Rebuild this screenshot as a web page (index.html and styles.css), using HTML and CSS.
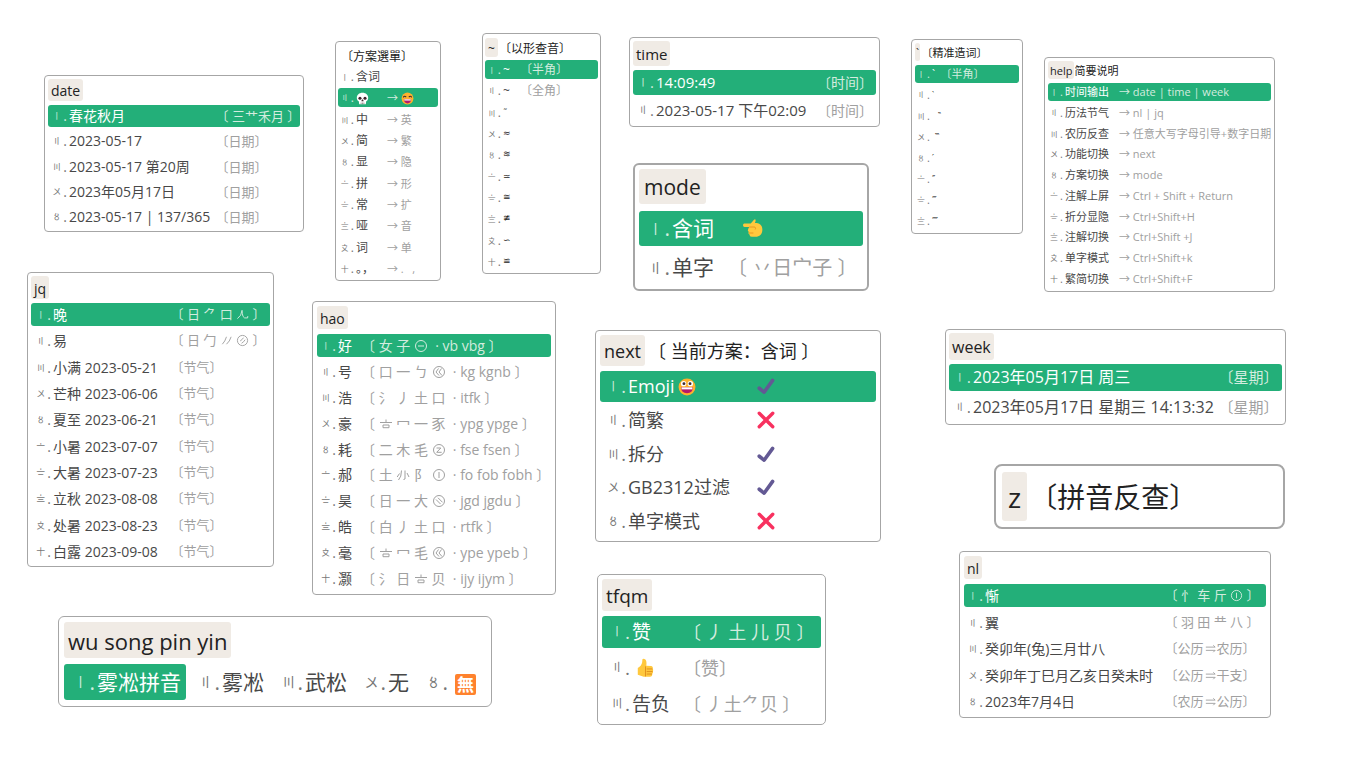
FILE: index.html
```html
<!DOCTYPE html>
<html lang="zh-CN">
<head>
<meta charset="utf-8">
<title>输入法候选窗口</title>
<link rel="stylesheet" href="styles.css">
</head>
<body>
<svg class="defs" aria-hidden="true">
  <symbol id="skull" viewBox="0 0 16 16"><path d="M8 1C3.800 1 1 3.700 1 7.200c0 2 .8 3.500 2.400 4.300L4 15h8l.6-3.500C14.200 10.700 15 9.200 15 7.200 15 3.700 12.200 1 8 1z" fill="#fff"/><circle cx="4.900" cy="7.600" r="1.900" fill="#40242c"/><circle cx="11.100" cy="7.600" r="1.900" fill="#40242c"/><path d="M8 9.300l-1.100 1.900h2.200zM6.300 13v2M8 13v2M9.700 13v2" fill="#40242c" stroke="#40242c" stroke-width=".6"/></symbol>
  <symbol id="laugh" viewBox="0 0 16 16"><circle cx="8" cy="8" r="7.300" fill="#ffb02e"/><path d="M2.800 6.600q1.600-2.400 3.600-.2M9.600 6.400q2-2.200 3.600.2" fill="none" stroke="#402a32" stroke-width="1.300"/><path d="M3.500 9h9q-.3 5-4.500 5T3.500 9z" fill="#b31a6d"/><path d="M4 9h8v1.500H4z" fill="#fff"/></symbol>
  <symbol id="grin" viewBox="0 0 16 16"><circle cx="8" cy="8" r="7.500" fill="#ffb02e"/><circle cx="5" cy="5" r="2.400" fill="#fff"/><circle cx="11" cy="5" r="2.400" fill="#fff"/><circle cx="5.300" cy="5" r="1.300" fill="#402a32"/><circle cx="10.700" cy="5" r="1.300" fill="#402a32"/><path d="M2.700 8.300h10.600q-.2 5.200-5.300 5.200T2.700 8.300z" fill="#b4186b"/><path d="M3.200 8.300h9.600v1.800H3.200z" fill="#fff"/></symbol>
  <symbol id="point" viewBox="0 0 16 16"><path d="M1 4.300h5.200L8.800 1.300q1.500-1 1.300 1L9.500 4c3.500 0 6 1.500 6 5.200 0 3.800-2.300 5.800-5.500 5.800H7q-2-.2-1.700-1.700Q3.800 12.600 4.500 11 3.300 10 4.200 8.600L5 7.200H1.200Q0 7 0 5.700t1-1.400z" fill="#ffc83d"/><path d="M5 7.200h4.500q1 1.200.2 2M4.800 12h3.500" fill="none" stroke="#e08a1a" stroke-width=".6"/></symbol>
  <symbol id="thumb" viewBox="0 0 16 16"><path d="M1.500 8.500Q4.800 6.300 5.200 3.500L5.400 1q1-1 2.500.2 1.300 1.300.8 5.300l4.300.2q1.800.6 1 2.300 1 1 .2 2.200.6 1.200-.5 2 .2 2.300-2 2.600H6.500L1.500 14z" fill="#ffc83d"/><path d="M8 7v8.500M9 9.200h5M9 11.400h5M9 13.500h4.500" stroke="#e08f1c" stroke-width=".8"/></symbol>
  <symbol id="check" viewBox="0 0 16 16"><path d="M2 10l4.300 3.500L13.900 3" fill="none" stroke="#635994" stroke-width="3.200" stroke-linecap="round" stroke-linejoin="round"/></symbol>
  <symbol id="cross" viewBox="0 0 16 16"><path d="M2 2l12 12M14 2L2 14" fill="none" stroke="#f8315f" stroke-width="3" stroke-linecap="round"/></symbol>
  <symbol id="gao" viewBox="0 0 14 14"><path d="M7 2.500v2.500M1 5.500h12M4 8h6v2.700H4z"/></symbol>
  <symbol id="legs" viewBox="0 0 14 14"><path d="M6.500 2.500Q6 8.500 1.500 11.500M6.500 2.500q.2 4 1 6.500 1 2.500 5 1.700l.2-2"/></symbol>
  <symbol id="slants" viewBox="0 0 14 14"><path d="M7 3Q5.500 8 2.500 11M12 3Q10.500 8 7 11"/></symbol>
  <symbol id="feet" viewBox="0 0 14 14"><path d="M5.500 2.500Q5.500 9 2.500 12M9 2.500v8.500l-1.500.5M3.500 5.500L1.200 9M11 5l2 4"/></symbol>
  <symbol id="c-heng" viewBox="0 0 14 14"><circle cx="7" cy="7" r="5.500"/><path d="M4 7h6"/></symbol>
  <symbol id="c-zhe" viewBox="0 0 14 14"><circle cx="7" cy="7" r="5.500"/><path d="M6.500 3.500L4 7l3 3.500M9.500 3.500L7 7l3 3.500"/></symbol>
  <symbol id="c-yi" viewBox="0 0 14 14"><circle cx="7" cy="7" r="5.500"/><path d="M4.500 5h4.300L4.700 9.300h5"/></symbol>
  <symbol id="c-shu" viewBox="0 0 14 14"><circle cx="7" cy="7" r="5.500"/><path d="M7 4v6"/></symbol>
  <symbol id="c-na" viewBox="0 0 14 14"><circle cx="7" cy="7" r="5.500"/><path d="M4 5.500l4.500 4.500M6 3.800l4.500 4.500"/></symbol>
  <symbol id="c-pie" viewBox="0 0 14 14"><circle cx="7" cy="7" r="5.500"/><path d="M8 4Q7 6 4.500 7.500M9.800 6.200Q8.500 8.500 6 10"/></symbol>
  <symbol id="turn" viewBox="0 0 14 14"><path d="M2 5.500h10M2 9h10M10 3.500l2 2M12 9l-2 2"/></symbol>
</svg>
<main class="canvas">

<section class="win date">
  <header><span class="chip">date</span></header>
  <ol>
    <li class="on"><span class="n"><b>〡</b>.</span><span class="t">春花秋月</span><span class="c">〔 三艹禾月 〕</span></li>
    <li><span class="n"><b>〢</b>.</span><span class="t">2023-05-17</span><span class="c">〔日期〕</span></li>
    <li><span class="n"><b>〣</b>.</span><span class="t">2023-05-17 第20周</span><span class="c">〔日期〕</span></li>
    <li><span class="n"><b>〤</b>.</span><span class="t">2023年05月17日</span><span class="c">〔日期〕</span></li>
    <li><span class="n"><b>〥</b>.</span><span class="t">2023-05-17 | 137/365</span><span class="c">〔日期〕</span></li>
  </ol>
</section>

<section class="win menu">
  <header><span class="title">〔方案選單〕</span></header>
  <ol>
    <li><span class="n"><b>〡</b>.</span><span class="t">含词</span></li>
    <li class="on"><span class="n"><b>〢</b>.</span><span class="t"><svg class="e"><use href="#skull"/></svg></span><span class="c">→ <svg class="e"><use href="#laugh"/></svg></span></li>
    <li><span class="n"><b>〣</b>.</span><span class="t">中</span><span class="c">→ 英</span></li>
    <li><span class="n"><b>〤</b>.</span><span class="t">简</span><span class="c">→ 繁</span></li>
    <li><span class="n"><b>〥</b>.</span><span class="t">显</span><span class="c">→ 隐</span></li>
    <li><span class="n"><b>〦</b>.</span><span class="t">拼</span><span class="c">→ 形</span></li>
    <li><span class="n"><b>〧</b>.</span><span class="t">常</span><span class="c">→ 扩</span></li>
    <li><span class="n"><b>〨</b>.</span><span class="t">哑</span><span class="c">→ 音</span></li>
    <li><span class="n"><b>〩</b>.</span><span class="t">词</span><span class="c">→ 单</span></li>
    <li><span class="n"><b>〸</b>.</span><span class="t full">。，</span><span class="c">→ .&nbsp; &nbsp;,</span></li>
  </ol>
</section>

<section class="win tilde">
  <header><span class="chip">~</span><span class="title">〔以形查音〕</span></header>
  <ol>
    <li class="on"><span class="n"><b>〡</b>.</span><span class="t">~</span><span class="c">〔半角〕</span></li>
    <li><span class="n"><b>〢</b>.</span><span class="t">~</span><span class="c">〔全角〕</span></li>
    <li><span class="n"><b>〣</b>.</span><span class="t sym">˜</span></li>
    <li><span class="n"><b>〤</b>.</span><span class="t sym">≈</span></li>
    <li><span class="n"><b>〥</b>.</span><span class="t sym">≋</span></li>
    <li><span class="n"><b>〦</b>.</span><span class="t sym">≃</span></li>
    <li><span class="n"><b>〧</b>.</span><span class="t sym">≅</span></li>
    <li><span class="n"><b>〨</b>.</span><span class="t sym">≇</span></li>
    <li><span class="n"><b>〩</b>.</span><span class="t sym">∽</span></li>
    <li><span class="n"><b>〸</b>.</span><span class="t sym">≌</span></li>
  </ol>
</section>

<section class="win time">
  <header><span class="chip">time</span></header>
  <ol>
    <li class="on"><span class="n"><b>〡</b>.</span><span class="t">14:09:49</span><span class="c">〔时间〕</span></li>
    <li><span class="n"><b>〢</b>.</span><span class="t">2023-05-17 下午02:09</span><span class="c">〔时间〕</span></li>
  </ol>
</section>

<section class="win mode">
  <header><span class="chip">mode</span></header>
  <ol>
    <li class="on"><span class="n"><b>〡</b>.</span><span class="t">含词</span><span class="c pic"><svg class="e"><use href="#point"/></svg></span></li>
    <li><span class="n"><b>〢</b>.</span><span class="t">单字</span><span class="c">〔 丷日宀子 〕</span></li>
  </ol>
</section>

<section class="win grave">
  <header><span class="chip">`</span><span class="title">〔精准造词〕</span></header>
  <ol>
    <li class="on"><span class="n"><b>〡</b>.</span><span class="t">`</span><span class="c">〔半角〕</span></li>
    <li><span class="n"><b>〢</b>.</span><span class="t sym">‵</span></li>
    <li><span class="n"><b>〣</b>.</span><span class="t sym">&nbsp; ‶</span></li>
    <li><span class="n"><b>〤</b>.</span><span class="t sym">&nbsp;‷</span></li>
    <li><span class="n"><b>〥</b>.</span><span class="t sym">′</span></li>
    <li><span class="n"><b>〦</b>.</span><span class="t sym">″</span></li>
    <li><span class="n"><b>〧</b>.</span><span class="t sym">‴</span></li>
    <li><span class="n"><b>〨</b>.</span><span class="t sym">⁗</span></li>
  </ol>
</section>

<section class="win help">
  <header><span class="chip">help</span><span class="title">简要说明</span></header>
  <ol>
    <li class="on"><span class="n"><b>〡</b>.</span><span class="t">时间输出</span><span class="c">→ date | time | week</span></li>
    <li><span class="n"><b>〢</b>.</span><span class="t">历法节气</span><span class="c">→ nl | jq</span></li>
    <li><span class="n"><b>〣</b>.</span><span class="t">农历反查</span><span class="c">→ 任意大写字母引导+数字日期</span></li>
    <li><span class="n"><b>〤</b>.</span><span class="t">功能切换</span><span class="c">→ next</span></li>
    <li><span class="n"><b>〥</b>.</span><span class="t">方案切换</span><span class="c">→ mode</span></li>
    <li><span class="n"><b>〦</b>.</span><span class="t">注解上屏</span><span class="c">→ Ctrl + Shift + Return</span></li>
    <li><span class="n"><b>〧</b>.</span><span class="t">折分显隐</span><span class="c">→ Ctrl+Shift+H</span></li>
    <li><span class="n"><b>〨</b>.</span><span class="t">注解切换</span><span class="c">→ Ctrl+Shift +J</span></li>
    <li><span class="n"><b>〩</b>.</span><span class="t">单字模式</span><span class="c">→ Ctrl+Shift+k</span></li>
    <li><span class="n"><b>〸</b>.</span><span class="t">繁简切换</span><span class="c">→ Ctrl+Shift+F</span></li>
  </ol>
</section>

<section class="win jq">
  <header><span class="chip">jq</span></header>
  <ol>
    <li class="on"><span class="n"><b>〡</b>.</span><span class="t">晚</span><span class="c">〔 日 ⺈ 口 <svg class="g"><use href="#legs"/></svg> 〕</span></li>
    <li><span class="n"><b>〢</b>.</span><span class="t">易</span><span class="c">〔 日 勹 <svg class="g"><use href="#slants"/></svg> <svg class="g"><use href="#c-pie"/></svg> 〕</span></li>
    <li><span class="n"><b>〣</b>.</span><span class="t">小满 2023-05-21</span><span class="c">〔节气〕</span></li>
    <li><span class="n"><b>〤</b>.</span><span class="t">芒种 2023-06-06</span><span class="c">〔节气〕</span></li>
    <li><span class="n"><b>〥</b>.</span><span class="t">夏至 2023-06-21</span><span class="c">〔节气〕</span></li>
    <li><span class="n"><b>〦</b>.</span><span class="t">小暑 2023-07-07</span><span class="c">〔节气〕</span></li>
    <li><span class="n"><b>〧</b>.</span><span class="t">大暑 2023-07-23</span><span class="c">〔节气〕</span></li>
    <li><span class="n"><b>〨</b>.</span><span class="t">立秋 2023-08-08</span><span class="c">〔节气〕</span></li>
    <li><span class="n"><b>〩</b>.</span><span class="t">处暑 2023-08-23</span><span class="c">〔节气〕</span></li>
    <li><span class="n"><b>〸</b>.</span><span class="t">白露 2023-09-08</span><span class="c">〔节气〕</span></li>
  </ol>
</section>

<section class="win hao">
  <header><span class="chip">hao</span></header>
  <ol>
    <li class="on"><span class="n"><b>〡</b>.</span><span class="t">好</span><span class="c">〔 女 子 <svg class="g"><use href="#c-heng"/></svg> &nbsp;· vb vbg 〕</span></li>
    <li><span class="n"><b>〢</b>.</span><span class="t">号</span><span class="c">〔 口 一 ㄅ <svg class="g"><use href="#c-zhe"/></svg> &nbsp;· kg kgnb 〕</span></li>
    <li><span class="n"><b>〣</b>.</span><span class="t">浩</span><span class="c">〔 氵 丿 土 口 &nbsp;· itfk 〕</span></li>
    <li><span class="n"><b>〤</b>.</span><span class="t">豪</span><span class="c">〔 <svg class="g"><use href="#gao"/></svg> 冖 一 豕 &nbsp;· ypg ypge 〕</span></li>
    <li><span class="n"><b>〥</b>.</span><span class="t">耗</span><span class="c">〔 二 木 毛 <svg class="g"><use href="#c-yi"/></svg> &nbsp;· fse fsen 〕</span></li>
    <li><span class="n"><b>〦</b>.</span><span class="t">郝</span><span class="c">〔 土 <svg class="g"><use href="#feet"/></svg> 阝 <svg class="g"><use href="#c-shu"/></svg> &nbsp;· fo fob fobh 〕</span></li>
    <li><span class="n"><b>〧</b>.</span><span class="t">昊</span><span class="c">〔 日 一 大 <svg class="g"><use href="#c-na"/></svg> &nbsp;· jgd jgdu 〕</span></li>
    <li><span class="n"><b>〨</b>.</span><span class="t">皓</span><span class="c">〔 白 丿 土 口 &nbsp;· rtfk 〕</span></li>
    <li><span class="n"><b>〩</b>.</span><span class="t">毫</span><span class="c">〔 <svg class="g"><use href="#gao"/></svg> 冖 毛 <svg class="g"><use href="#c-zhe"/></svg> &nbsp;· ype ypeb 〕</span></li>
    <li><span class="n"><b>〸</b>.</span><span class="t">灏</span><span class="c">〔 氵 日 <svg class="g"><use href="#gao"/></svg> 贝 &nbsp;· ijy ijym 〕</span></li>
  </ol>
</section>

<section class="win next">
  <header><span class="chip">next</span><span class="title">〔 当前方案<span class="full">：</span>含词 〕</span></header>
  <ol>
    <li class="on"><span class="n"><b>〡</b>.</span><span class="t">Emoji<svg class="e"><use href="#grin"/></svg></span><span class="c"><svg class="e"><use href="#check"/></svg></span></li>
    <li><span class="n"><b>〢</b>.</span><span class="t">简繁</span><span class="c"><svg class="e"><use href="#cross"/></svg></span></li>
    <li><span class="n"><b>〣</b>.</span><span class="t">拆分</span><span class="c"><svg class="e"><use href="#check"/></svg></span></li>
    <li><span class="n"><b>〤</b>.</span><span class="t">GB2312过滤</span><span class="c"><svg class="e"><use href="#check"/></svg></span></li>
    <li><span class="n"><b>〥</b>.</span><span class="t">单字模式</span><span class="c"><svg class="e"><use href="#cross"/></svg></span></li>
  </ol>
</section>

<section class="win week">
  <header><span class="chip">week</span></header>
  <ol>
    <li class="on"><span class="n"><b>〡</b>.</span><span class="t">2023年05月17日 周三</span><span class="c">〔星期〕</span></li>
    <li><span class="n"><b>〢</b>.</span><span class="t">2023年05月17日 星期三 14:13:32</span><span class="c">〔星期〕</span></li>
  </ol>
</section>

<section class="win zed">
  <header><span class="chip">z</span><span class="title">〔拼音反查〕</span></header>
</section>

<section class="win wusong">
  <header><span class="chip">wu song pin yin</span></header>
  <ol>
    <li class="on"><span class="n"><b>〡</b>.</span><span class="t">雾凇拼音</span></li>
    <li><span class="n"><b>〢</b>.</span><span class="t">雾凇</span></li>
    <li><span class="n"><b>〣</b>.</span><span class="t">武松</span></li>
    <li><span class="n"><b>〤</b>.</span><span class="t">无</span></li>
    <li><span class="n"><b>〥</b>.</span><span class="t"><span class="tile">無</span></span></li>
  </ol>
</section>

<section class="win tfqm">
  <header><span class="chip">tfqm</span></header>
  <ol>
    <li class="on"><span class="n"><b>〡</b>.</span><span class="t">赞</span><span class="c">〔 丿 土 儿 贝 〕</span></li>
    <li><span class="n"><b>〢</b>.</span><span class="t pic"><svg class="e"><use href="#thumb"/></svg></span><span class="c">〔赞〕</span></li>
    <li><span class="n"><b>〣</b>.</span><span class="t">告负</span><span class="c">〔 丿土⺈贝 〕</span></li>
  </ol>
</section>

<section class="win nl">
  <header><span class="chip">nl</span></header>
  <ol>
    <li class="on"><span class="n"><b>〡</b>.</span><span class="t">惭</span><span class="c">〔 忄 车 斤 <svg class="g"><use href="#c-shu"/></svg> 〕</span></li>
    <li><span class="n"><b>〢</b>.</span><span class="t">翼</span><span class="c">〔 羽 田 龷 八 〕</span></li>
    <li><span class="n"><b>〣</b>.</span><span class="t">癸卯年(兔)三月廿八</span><span class="c">〔公历<svg class="g"><use href="#turn"/></svg>农历〕</span></li>
    <li><span class="n"><b>〤</b>.</span><span class="t">癸卯年丁巳月乙亥日癸未时</span><span class="c">〔公历<svg class="g"><use href="#turn"/></svg>干支〕</span></li>
    <li><span class="n"><b>〥</b>.</span><span class="t">2023年7月4日</span><span class="c">〔农历<svg class="g"><use href="#turn"/></svg>公历〕</span></li>
  </ol>
</section>

</main>
</body>
</html>
```
FILE: styles.css
```css
* { box-sizing: border-box; }

body {
  margin: 0;
  background: #fff;
  color: #222;
  font-family: "Open Sans", "Noto Sans CJK SC", sans-serif;
}

.defs { position: absolute; width: 0; height: 0; }

/* Free canvas: every candidate window is pinned at its own spot. */
.canvas { position: relative; min-height: 100vh; overflow: hidden; }

.win {
  --fs: 14px;
  --cs: 13px;
  --row: 22px;
  --gap: 3px;
  --pad: 3px;
  --chip: 3px;
  --i: 21px;
  --t: 30px;
  position: absolute;
  display: flex;
  flex-direction: column;
  gap: var(--gap);
  padding: var(--pad);
  border: 1px solid #a6a6a6;
  border-radius: 4px;
  background: #fff;
  font-size: var(--fs);
  white-space: nowrap;
  font-feature-settings: "halt";
}

.win header { display: flex; align-items: center; line-height: calc(var(--row) - 2px); }
.chip {
  padding: 2px var(--chip) 0;
  border-radius: 3px;
  background: #f0ebe5;
}
.title { padding: 2px 0 0 var(--lead, 0); }
.full { font-feature-settings: normal; }

.win ol {
  flex: 1;
  display: flex;
  flex-direction: column;
  justify-content: space-between;
  margin: 0;
  padding: 0;
  list-style: none;
}
.win li {
  display: grid;
  grid-template-columns: var(--i) var(--t) 1fr;
  align-items: center;
  height: var(--row);
  line-height: var(--row);
  border-radius: 3px;
  color: #484848;
}

.n {
  display: flex;
  justify-content: flex-end;
  align-items: center;
  gap: 2px;
  padding-right: 2px;
  color: #777;
}
.n b { font-weight: 400; font-size: var(--ns, 9px); }
.c { color: #a0a0a0; font-size: var(--cs); }

.win .on { background: #23af79; color: #fff; }
.on .n, .on .c { color: #d3ecdf; }

.e { width: 1em; height: 1em; vertical-align: -2px; }
.g {
  width: 1em;
  height: 1em;
  vertical-align: -2px;
  fill: none;
  stroke: currentColor;
  stroke-width: 1;
}
.sym { font-family: "DejaVu Sans", sans-serif; font-size: 9px; color: #222; }

.date { left: 44px; top: 75px; width: 260px; min-height: 157px; --gap: 4px; --t: 153px; }

.menu, .tilde { --fs: 12px; --cs: 12px; --row: 19px; --i: 18px; --ns: 8px; padding: 4px 2px 2px; }
.menu { left: 335px; top: 41px; width: 106px; min-height: 240px; --lead: 9px; --gap: 2px; --t: 31px; }
.menu .c { font-size: 11px; }
.menu .e { width: 13px; height: 13px; vertical-align: -3px; }
.tilde { left: 482px; top: 33px; width: 119px; min-height: 241px; --lead: 7px; --t: 23px; }

.time { left: 629px; top: 37px; width: 251px; min-height: 90px; --fs: 15px; --cs: 14px; --row: 25px; --gap: 4px; --i: 23px; --t: 168px; --ns: 10px; }

.mode { left: 633px; top: 163px; width: 236px; min-height: 128px; --fs: 21px; --cs: 20px; --row: 35px; --gap: 7px; --pad: 4px; --chip: 5px; --i: 33px; --t: 65px; --ns: 14px; border-width: 2px; border-radius: 6px; }
.mode .pic { padding-left: 6px; }

.grave, .help { --fs: 11px; --cs: 11px; --row: 18px; --gap: 4px; --i: 17px; --ns: 8px; }
.grave { left: 911px; top: 39px; width: 112px; min-height: 195px; --chip: 1px; --lead: 7px; --t: 14px; }
.help { left: 1044px; top: 57px; width: 231px; min-height: 235px; --chip: 2px; --t: 54px; }

.jq { left: 27px; top: 272px; width: 247px; min-height: 295px; --row: 23px; --gap: 4px; --t: 124px; --i: 22px; }

.hao { left: 312px; top: 301px; width: 244px; min-height: 294px; --cs: 14px; --row: 23px; --gap: 5px; --pad: 4px; }

.next { left: 595px; top: 330px; width: 286px; min-height: 212px; --fs: 18px; --cs: 18px; --row: 31px; --gap: 5px; --pad: 4px; --lead: 12px; --i: 28px; --t: 129px; --ns: 12px; --chip: 4px; }
.next .t .e { margin-left: 3px; vertical-align: -3px; }

.week { left: 945px; top: 329px; width: 341px; min-height: 96px; --fs: 16px; --cs: 15px; --row: 27px; --gap: 4px; --i: 24px; --t: 253px; --ns: 10px; }

.zed { left: 994px; top: 464px; width: 291px; min-height: 65px; --fs: 28px; --row: 49px; --pad: 6px; --chip: 6px; --lead: 16px; border-width: 2px; border-radius: 8px; }

.wusong { left: 58px; top: 616px; width: 434px; min-height: 91px; --fs: 22px; --row: 36px; --gap: 6px; --pad: 5px; --chip: 4px; --i: 33px; --ns: 14px; border-radius: 6px; }
.wusong ol { flex-direction: row; justify-content: flex-start; gap: 3px; font-size: 21px; }
.wusong li { grid-template-columns: var(--i) auto; padding-right: 5px; }
.tile {
  display: inline-block;
  padding: 0 2px;
  margin-left: 5px;
  border-radius: 2px;
  background: #ff822d;
  color: #fff;
  font-size: 17px;
  font-weight: 700;
  line-height: 21px;
  vertical-align: middle;
}

.tfqm { left: 597px; top: 574px; width: 229px; min-height: 151px; --fs: 19px; --cs: 18px; --row: 32px; --gap: 5px; --pad: 4px; --chip: 4px; --i: 30px; --t: 60px; --ns: 12px; border-radius: 5px; }
.tfqm .pic { padding-left: 4px; }

.nl { left: 959px; top: 551px; width: 312px; min-height: 167px; --row: 23px; --gap: 5px; --pad: 4px; --t: 186px; }
```
